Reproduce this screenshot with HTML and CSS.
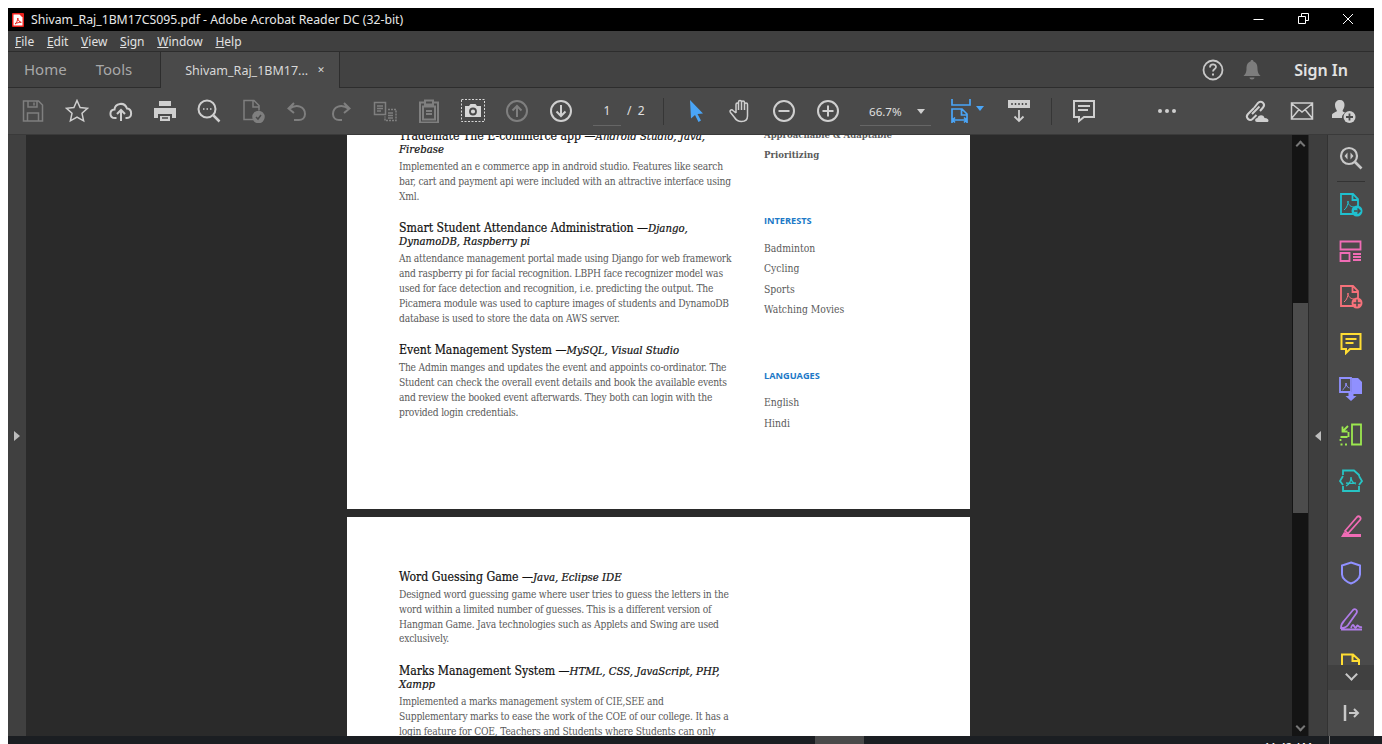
FILE: index.html
```html
<!DOCTYPE html>
<html lang="en">
<head>
<meta charset="utf-8">
<title>Shivam_Raj_1BM17CS095.pdf - Adobe Acrobat Reader DC (32-bit)</title>
<link rel="stylesheet" href="styles.css">
</head>
<body>
<div class="app">
  <header class="titlebar">
    <svg class="app-icon" viewBox="0 0 12 14" width="12" height="14"><rect width="12" height="14" rx="1" fill="#e8211c"/><path d="M1.500 1.500h6l3 3v8h-9z" fill="#fff"/><path d="M3 11c1.500-1 2.700-3.500 2.800-6 .3 2.500 1.700 4 3.500 4.300-2 0-4.300.4-6.300 1.700z" fill="none" stroke="#e8211c" stroke-width="1"/></svg>
    <span class="title-text">Shivam_Raj_1BM17CS095.pdf - Adobe Acrobat Reader DC (32-bit)</span>
    <div class="winctl">
      <svg viewBox="0 0 45 22" width="45" height="22"><path d="M17.500 10.500h10" stroke="#fff" fill="none"/></svg>
      <svg viewBox="0 0 45 22" width="45" height="22"><path d="M17.500 7.500h7v7h-7zM20.500 7.500v-3h7v7h-3" stroke="#fff" fill="none"/></svg>
      <svg viewBox="0 0 45 22" width="45" height="22"><path d="M17 5l10 10M27 5l-10 10" stroke="#fff" fill="none"/></svg>
    </div>
  </header>
  <nav class="menubar">
    <span class="menu-item"><u>F</u>ile</span>
    <span class="menu-item"><u>E</u>dit</span>
    <span class="menu-item"><u>V</u>iew</span>
    <span class="menu-item"><u>S</u>ign</span>
    <span class="menu-item"><u>W</u>indow</span>
    <span class="menu-item"><u>H</u>elp</span>
  </nav>
  <div class="tabbar">
    <span class="tab tab-home">Home</span>
    <span class="tab tab-tools">Tools</span>
    <div class="tab-active"><span class="tab-name">Shivam_Raj_1BM17...</span><span class="tab-close">✕</span></div>
    <div class="tab-right">
      <svg class="help" viewBox="0 0 22 22" width="22" height="22"><circle cx="11" cy="11" r="9.500" fill="none" stroke="#c8c8c8" stroke-width="1.800"/><path d="M8 8.500c0-4 6-4 6-.5 0 2-3 2-3 4.500" fill="none" stroke="#c8c8c8" stroke-width="1.800"/><rect x="10" y="14.500" width="2" height="2" fill="#c8c8c8"/></svg>
      <svg class="bell" viewBox="0 0 20 22" width="20" height="22"><path d="M10 1c1 0 1.500.7 1.500 1.500C15 3.500 15.500 7 15.500 10c0 3 1 5 3 7H1.500c2-2 3-4 3-7 0-3 .5-6.500 4-7.500C8.500 1.700 9 1 10 1zM7.500 18.500h5c0 1-1 2-2.500 2s-2.500-1-2.500-2z" fill="#7d7d7d"/></svg>
      <span class="signin">Sign In</span>
    </div>
  </div>
  <div class="toolbar">
    <span class="btn"><svg viewBox="0 0 24 24" width="24" height="24" class="s-off"><path d="M2.500 2h15l4 4v16h-19zM7 2v6h9V2M13 3.500v3M6.500 22v-8h11v8"/></svg></span>
    <span class="btn"><svg viewBox="0 0 24 24" width="24" height="24" class="s-on"><path d="M12 1.500l3.100 7 7.400.8-5.500 5 1.600 7.500-6.600-3.800-6.600 3.800 1.600-7.500-5.500-5 7.400-.8z"/></svg></span>
    <span class="btn"><svg viewBox="0 0 24 24" width="24" height="24" class="s-on s-bold"><path d="M7.500 19H6c-6 0-6-8-.5-8.500C6 4 15.500 2.500 18 9.500c5.500.5 5.500 9.500 0 9.500h-1.500M12 22V11.500M8 15l4-4 4 4"/></svg></span>
    <span class="btn"><svg viewBox="0 0 24 24" width="24" height="24"><path d="M6 2h12v5H6zM1 9h22v10h-4v-4H5v4H1zM7 17h10v5H7z" fill="#cfcfcf"/><path d="M9 19h6" stroke="#4a4a4a" stroke-width="1.500"/></svg></span>
    <span class="btn"><svg viewBox="0 0 24 24" width="24" height="24" class="s-on s-bold"><circle cx="10" cy="10" r="8.500"/><path d="M16.500 16.500l6 6" stroke-width="2.500"/><path d="M6 10h1.500M9.500 10H11M13 10h1.500" stroke-width="1.600"/></svg></span>
    <span class="btn"><svg viewBox="0 0 24 24" width="24" height="24" class="s-off"><path d="M13 20.500H3v-19h10l5 5v5M12 2v6h6"/><circle cx="17.500" cy="18" r="5.500" fill="#7f7f7f"/><path d="M15 18l2 2 3-4" stroke="#4a4a4a"/></svg></span>
    <span class="btn"><svg viewBox="0 0 24 24" width="24" height="24" class="s-off s-bold"><path d="M4 10c8-6 16-2 16 5 0 4-3 6-6 6H9M9 4L3.500 9.500 9 14"/></svg></span>
    <span class="btn"><svg viewBox="0 0 24 24" width="24" height="24" class="s-off s-bold"><path d="M20 10c-8-6-16-2-16 5 0 4 3 6 6 6h3M15 4l5.500 5.500L15 14"/></svg></span>
    <span class="btn"><svg viewBox="0 0 24 24" width="24" height="24" class="s-off"><path d="M1.500 3.500h11v12h-11zM4 7h6M4 9.500h6M4 12h4"/><path d="M15 10.500h8v11H12v-4" stroke-dasharray="2 1"/><path d="M15 14h5M15 16.500h5M15 19h5"/></svg></span>
    <span class="btn"><svg viewBox="0 0 24 24" width="24" height="24" class="s-off s-bold"><path d="M7 3.500H3v20h18v-20h-4M8 1.500h8v4H8zM6 7.500h12v13H6zM9 12h6M9 15h6"/></svg></span>
    <span class="btn"><svg viewBox="0 0 24 24" width="24" height="24"><rect x=".5" y=".5" width="23" height="22" fill="none" stroke="#d8d8d8" stroke-dasharray="2 1.500"/><path d="M4 7h4l1.500-2h5L16 7h4v11H4z" fill="#d8d8d8"/><circle cx="12" cy="12.500" r="3" fill="none" stroke="#4a4a4a" stroke-width="1.800"/></svg></span>
    <span class="btn"><svg viewBox="0 0 24 24" width="24" height="24" class="s-off s-bold"><circle cx="12" cy="12" r="10"/><path d="M12 18V7M7.500 11.500L12 7l4.500 4.500"/></svg></span>
    <span class="btn"><svg viewBox="0 0 24 24" width="24" height="24" class="s-on s-bold"><circle cx="12" cy="12" r="10"/><path d="M12 6v11M7.500 12.500L12 17l4.500-4.500"/></svg></span>
    <div class="pager">
      <span class="page-no">1</span>
      <span class="page-total">/&nbsp;&nbsp;2</span>
    </div>
    <span class="vsep"></span>
    <span class="btn"><svg viewBox="0 0 24 24" width="24" height="24"><path d="M6 1l13 13.500-5.500.5 3.500 6.500-2.500 1.500-3.500-7L7 19.500z" fill="#4aa5f7"/></svg></span>
    <span class="btn"><svg viewBox="0 0 24 24" width="24" height="24" class="s-on"><path d="M8 14V5.500c0-2 2.500-2 2.500 0V11M10.500 11V3c0-2 3-2 3 0v8M13.500 11V3.500c0-2 3-2 3 0V11M16.500 11V5.500c0-2 3-2 3 0V17c0 4-3 5.500-6 5.500-4 0-5.500-1.500-7-4l-4-5c-1.500-2 1-3.500 2.500-2l3 2.500"/></svg></span>
    <span class="btn"><svg viewBox="0 0 24 24" width="24" height="24" class="s-on s-bold"><circle cx="12" cy="12" r="10"/><path d="M6.500 12h11"/></svg></span>
    <span class="btn"><svg viewBox="0 0 24 24" width="24" height="24" class="s-on s-bold"><circle cx="12" cy="12" r="10"/><path d="M6.500 12h11M12 6.500v11"/></svg></span>
    <div class="zoomctl"><span class="zoom-val">66.7%</span><span class="caret"></span></div>
    <span class="btn fit"><svg viewBox="0 0 24 26" width="24" height="26" fill="none" stroke="#4aa5f7" stroke-width="2"><path d="M3 1v6h18V1M3 25V11h10l5 5v9M3 22h15M6 19.500L3.500 22 6 24.500M15 19.500l2.500 2.500-2.500 2.500M12.500 11v6H18" stroke-width="1.700"/></svg><span class="caret caret-blue"></span></span>
    <span class="btn read"><svg viewBox="0 0 24 24" width="24" height="24"><path d="M1 1h22v8H1z" fill="#cfcfcf"/><path d="M5 4v2M8.500 4v2M12 4v2M15.500 4v2M19 4v2" stroke="#4a4a4a" stroke-width="1.500"/><path d="M12 11v11M7.500 17.500L12 22l4.500-4.500" stroke="#cfcfcf" stroke-width="1.800" fill="none"/></svg></span>
    <span class="vsep vsep-b"></span>
    <span class="btn comment"><svg viewBox="0 0 24 24" width="24" height="24" class="s-on s-bold"><path d="M2 2h20v16H12l-5 4v-4H2zM6 7h12M6 11h10"/></svg></span>
    <span class="dots"><i></i><i></i><i></i></span>
    <span class="btn link"><svg viewBox="0 0 26 24" width="26" height="24"><g fill="none" stroke="#cfcfcf" stroke-width="2"><path d="M10 9L4 15c-3 3 1 8 4.500 5l4-4"/><path d="M8 15l7.500-7.500M10 9l4-5c3.500-3 8 1 5 4.500L16 12"/></g><path d="M13 23c-2.500 0-2.500-4 .5-4 .5-3 6-4 7 0 3 0 4 1.500 4 2.500 0 1-.7 1.500-1.500 1.500z" fill="#cfcfcf"/></svg></span>
    <span class="btn mail"><svg viewBox="0 0 24 24" width="24" height="24" class="s-on"><path d="M1.500 4h21v16h-21zM1.500 4.500L12 13 22.500 4.500M1.500 19.500L9 10.500M22.500 19.500L15 10.500"/></svg></span>
    <span class="btn user"><svg viewBox="0 0 26 24" width="26" height="24"><path d="M9 1c3 0 4.500 2 4.500 5s-1.500 4.500-2 6c1 1 2 1.300 2.700 1.800C11 15.500 11 18 11 19H1v-3c0-2 4-2.800 5-4-.7-1.500-2-3-2-6s2-5 5-5z" fill="#cfcfcf"/><circle cx="18.500" cy="18" r="6" fill="#cfcfcf"/><path d="M18.500 14.500v7M15 18h7" stroke="#4a4a4a" stroke-width="1.800"/></svg></span>
  </div>
  <main class="workspace">
    <div class="rail-left"><span class="arrow-r"></span></div>
    <div class="viewer">
      <div class="pages">
        <section class="page page-one">
          <div class="col-main">
            <article class="project">
              <h3>Trademate The E-commerce app —<em>Android Studio, Java,<br>Firebase</em></h3>
              <p>Implemented an e commerce app in android studio. Features like search<br>bar, cart and payment api were included with an attractive interface using<br>Xml.</p>
            </article>
            <article class="project">
              <h3>Smart Student Attendance Administration —<em>Django,<br>DynamoDB, Raspberry pi</em></h3>
              <p>An attendance management portal made using Django for web framework<br>and raspberry pi for facial recognition. LBPH face recognizer model was<br>used for face detection and recognition, i.e. predicting the output. The<br>Picamera module was used to capture images of students and DynamoDB<br>database is used to store the data on AWS server.</p>
            </article>
            <article class="project">
              <h3>Event Management System —<em>MySQL, Visual Studio</em></h3>
              <p>The Admin manges and updates the event and appoints co-ordinator. The<br>Student can check the overall event details and book the available events<br>and review the booked event afterwards. They both can login with the<br>provided login credentials.</p>
            </article>
          </div>
          <aside class="col-side">
            <ul class="side-list">
              <li class="strong">Approachable &amp; Adaptable</li>
              <li class="strong">Prioritizing</li>
            </ul>
            <h4>INTERESTS</h4>
            <ul class="side-list">
              <li>Badminton</li>
              <li>Cycling</li>
              <li>Sports</li>
              <li>Watching Movies</li>
            </ul>
            <h4>LANGUAGES</h4>
            <ul class="side-list">
              <li>English</li>
              <li>Hindi</li>
            </ul>
          </aside>
        </section>
        <section class="page page-two">
          <div class="col-main">
            <article class="project">
              <h3>Word Guessing Game —<em>Java, Eclipse IDE</em></h3>
              <p>Designed word guessing game where user tries to guess the letters in the<br>word within a limited number of guesses. This is a different version of<br>Hangman Game. Java technologies such as Applets and Swing are used<br>exclusively.</p>
            </article>
            <article class="project">
              <h3>Marks Management System —<em>HTML, CSS, JavaScript, PHP,<br>Xampp</em></h3>
              <p>Implemented a marks management system of CIE,SEE and<br>Supplementary marks to ease the work of the COE of our college. It has a<br>login feature for COE, Teachers and Students where Students can only<br>view their marks.</p>
            </article>
          </div>
        </section>
      </div>
    </div>
    <div class="scrollbar">
      <span class="chev chev-up"></span>
      <div class="track"><span class="thumb"></span></div>
      <span class="chev chev-down"></span>
    </div>
    <div class="rail-right"><span class="arrow-l"></span></div>
    <aside class="tools">
      <div class="tool-list">
        <span class="tool tool-top"><svg viewBox="0 0 24 24" width="24" height="24" fill="none" stroke="#c8c8c8" stroke-width="2.200"><circle cx="10" cy="10" r="8"/><path d="M16 16l6.500 6.500" stroke-width="2.600"/><path d="M8.500 6.500L5.500 10l3 3.500zM11.500 6.500l3 3.500-3 3.500z" fill="#c8c8c8" stroke="none"/></svg></span>
        <span class="tool-sep"></span>
        <span class="tool"><svg viewBox="0 0 24 24" width="24" height="24" fill="none" stroke="#1fc0cf" stroke-width="1.800"><path d="M14 21H2V1h12l5 5v7M13.500 1v6H19"/><path d="M5 17c3-2 4-6 4-9 0 4 3 6 6 6" stroke-width="1"/><circle cx="18" cy="18" r="5.500" fill="#1fc0cf" stroke="none"/><path d="M15 18h6M18.500 15.500L21 18l-2.500 2.500" stroke="#4a4a4a" stroke-width="1.500"/></svg></span>
        <span class="tool"><svg viewBox="0 0 24 24" width="24" height="24" fill="none" stroke="#f06cb5" stroke-width="1.800"><path d="M1.500 2.500h20v8h-20zM1.500 14h9v8h-9zM14 15h8M14 18h8M14 21h8"/></svg></span>
        <span class="tool"><svg viewBox="0 0 24 24" width="24" height="24" fill="none" stroke="#f6717a" stroke-width="1.800"><path d="M14 21H2V1h12l5 5v7M13.500 1v6H19"/><path d="M5 17c3-2 4-6 4-9 0 4 3 6 6 6" stroke-width="1"/><circle cx="18" cy="18" r="5.500" fill="#f6717a" stroke="none"/><path d="M14.500 18h7M18 14.500v7" stroke="#4a4a4a" stroke-width="1.500"/></svg></span>
        <span class="tool"><svg viewBox="0 0 24 24" width="24" height="24" fill="none" stroke="#ffdd33" stroke-width="2"><path d="M2.500 3h19v15H11l-4 4v-4H2.500zM6.500 8h11M6.500 12h8"/></svg></span>
        <span class="tool"><svg viewBox="0 0 24 24" width="24" height="24"><path d="M1 1h11v14H1z" fill="none" stroke="#9090ff" stroke-width="1.800"/><path d="M13 1h6l4 4v12H13z" fill="#9090ff"/><path d="M3.500 13c2.500-2 3.500-4 3.500-7 0 3 2 4.500 3.500 5" fill="none" stroke="#9090ff"/><path d="M9.500 15h5v4h3L12 24l-5.500-5h3z" fill="#9090ff"/></svg></span>
        <span class="tool"><svg viewBox="0 0 24 24" width="24" height="24" fill="none" stroke="#9ce84f" stroke-width="1.800"><path d="M13 1.500h9v20h-9zM1.500 21.500h2M6 21.500h2M1.500 18v-2M1.500 14h7M9.500 14V9M9 3L3.500 8.500M3.500 3.500v5h5"/></svg></span>
        <span class="tool"><svg viewBox="0 0 24 24" width="24" height="24" fill="none" stroke="#27c4c4" stroke-width="1.800"><path d="M4 6V1.500h11L20 6v1M20 17v5H4v-5M4 7L1 12l3 4M20 7l3 5-3 4"/><path d="M7 17c3-1.500 5-4.500 5-9 0 4 2 6 5 7M7 14c3 .5 7 .5 10 0" stroke-width="1.300"/></svg></span>
        <span class="tool"><svg viewBox="0 0 24 24" width="24" height="24"><path d="M6 16L18 2c2-2 5 1 3 3L9 18.500z" fill="none" stroke="#f06cb5" stroke-width="1.800"/><path d="M2 22l3-5 5 2h12v3z" fill="#f06cb5"/></svg></span>
        <span class="tool"><svg viewBox="0 0 24 24" width="24" height="24" fill="none" stroke="#9090ff" stroke-width="2"><path d="M12 1.500l9 3v9c0 4-5 7.500-9 9-4-1.500-9-5-9-9v-9z"/></svg></span>
        <span class="tool"><svg viewBox="0 0 24 24" width="24" height="24" fill="none" stroke="#b07ce8" stroke-width="1.800"><path d="M2 21c0-4 1-5 3-7l9-11c2-2 5 0 3.500 3L9 18c-1.500 2-3 3-7 3zM2 22.500h21M12 21c1-3 2-4 3-2s2 2 3 0 1 2 5 1"/></svg></span>
        <span class="tool"><svg viewBox="0 0 24 24" width="24" height="24" fill="none" stroke="#ffdd33" stroke-width="2"><path d="M3 22V1.500h11L20 7v15M13.500 2v6H20"/></svg></span>
      </div>
      <div class="tool-more"><span class="chev-big"></span></div>
      <div class="tool-expand"><svg viewBox="0 0 18 18" width="18" height="18" fill="none" stroke="#c8c8c8" stroke-width="2"><path d="M3 1v16" stroke-width="2.500"/><path d="M7 9h9M12 5l4 4-4 4"/></svg></div>
    </aside>
  </main>
</div>
<footer class="taskbar">
  <span class="hscroll"></span>
  <span class="clock">11:42 AM</span>
  <span class="showdesk"></span>
</footer>
</body>
</html>
```
FILE: styles.css
```css
* { box-sizing: border-box; }
html, body { height: 100%; }
body {
  margin: 0;
  padding: 8px 0 0 8px;
  background: #fff;
  overflow: hidden;
  font-family: "Noto Sans", "Open Sans", sans-serif;
}
.app {
  width: 1366px;
  height: 728px;
  display: flex;
  flex-direction: column;
  overflow: hidden;
  background: #4a4a4a;
}
.titlebar {
  height: 23px;
  background: #000;
  display: flex;
  align-items: center;
  padding-left: 4px;
  color: #e8e8e8;
  flex: none;
}
.app-icon { flex: none; }
.title-text { margin-left: 7px; font-size: 12.270px; white-space: nowrap; }
.winctl { margin-left: auto; display: flex; padding-right: 3px; }
.winctl svg { display: block; flex: none; }
.menubar {
  height: 21px;
  flex: none;
  background: #404040;
  border-bottom: 1px solid #2d2d2d;
  display: flex;
  align-items: center;
  padding-left: 7px;
  gap: 12.700px;
  font-size: 12px;
  color: #e2e2e2;
}
.tabbar {
  height: 36px;
  flex: none;
  background: #424242;
  border-bottom: 1px solid #2d2d2d;
  display: flex;
  align-items: stretch;
}
.tab { font-size: 15px; color: #a8a8a8; line-height: 34px; }
.tab-home { margin-left: 16px; }
.tab-tools { margin-left: 29px; }
.tab-active {
  margin-left: 28px;
  width: 180px;
  height: 36px;
  background: #4a4a4a;
  border-left: 1px solid #2d2d2d;
  border-right: 1px solid #2d2d2d;
  padding-left: 24px;
  display: flex;
  align-items: center;
  color: #d8d8d8;
  font-size: 12.500px;
  white-space: nowrap;
}
.tab-close { margin-left: 9px; font-size: 9px; font-weight: 700; color: #d8d8d8; font-family: "DejaVu Sans", sans-serif; }
.tab-right { margin-left: auto; display: flex; align-items: center; padding-right: 26px; }
.bell { margin-left: 18px; }
.signin { margin-left: 32px; font-size: 16px; font-weight: 600; color: #e2e2e2; line-height: 34px; }
.toolbar {
  height: 47px;
  flex: none;
  background: #4a4a4a;
  border-bottom: 1px solid #3a3a3a;
  display: flex;
  align-items: center;
  padding-left: 3px;
}
.btn { width: 44px; height: 44px; flex: none; display: flex; align-items: center; justify-content: center; }
.btn svg { display: block; }
svg.s-off, svg.s-on { fill: none; stroke-width: 1.500; }
svg.s-off { stroke: #7f7f7f; }
svg.s-on { stroke: #cfcfcf; }
svg.s-bold { stroke-width: 2; }
.pager { width: 80px; flex: none; display: flex; font-size: 12px; color: #e0e0e0; align-items: center; }
.page-no { width: 28px; margin-left: 10px; text-align: center; border-bottom: 1px solid #666; line-height: 24px; height: 27px; margin-top: 3px; }
.page-total { margin-left: 6px; margin-top: -1px; }
.vsep { width: 1px; height: 27px; background: #363636; flex: none; margin-right: 10px; }
.vsep-b { margin: 0 10px 0 10px; }
.zoomctl {
  width: 71px;
  margin-left: 10px;
  flex: none;
  display: flex;
  align-items: center;
  justify-content: space-between;
  height: 27px;
  margin-top: 3px;
  border-bottom: 1px solid #666;
  font-size: 11.600px;
  color: #e0e0e0;
  padding: 0 6px 2px 9px;
}
.caret { width: 0; height: 0; border-left: 4px solid transparent; border-right: 4px solid transparent; border-top: 5px solid #cfcfcf; }
.caret-blue { border-top-color: #4aa5f7; margin: -6px 0 0 3px; }
.fit { width: 66px; padding-left: 18px; justify-content: flex-start; }
.dots { width: 122px; flex: none; display: flex; gap: 3px; justify-content: center; }
.dots i { width: 4px; height: 4px; background: #cfcfcf; border-radius: 50%; }
.link { margin-left: 7px; }
.mail { margin-left: 1px; }
.user { margin-left: -2px; }
.workspace { flex: 1; min-height: 0; display: flex; }
.rail-left { width: 18px; flex: none; background: #404040; display: flex; align-items: center; justify-content: center; }
.arrow-r { border-left: 6px solid #bdbdbd; border-top: 5.500px solid transparent; border-bottom: 5.500px solid transparent; }
.viewer { flex: 1; min-width: 0; background: #2a2a2a; overflow: hidden; display: flex; justify-content: center; }
.pages { width: 623px; margin-top: -15px; margin-left: -1px; flex: none; }
.page { background: #fff; display: flex; padding-left: 52px; overflow: hidden; }
.page-one { height: 389px; margin-bottom: 8px; padding-top: 9.500px; }
.page-two { height: 400px; padding-top: 53.500px; }
.col-main { width: 365px; flex: none; }
.project { margin-bottom: 17.500px; }
.project h3 {
  margin: 0 0 4.500px;
  font: 400 12.200px/13px "DejaVu Serif Condensed", "DejaVu Serif", serif;
  -webkit-text-stroke: .2px #111;
  color: #111;
  white-space: nowrap;
}
.project em { font-style: italic; font-size: 11.300px; }
.project p {
  margin: 0;
  font: 400 10.200px/14.800px "DejaVu Serif Condensed", "DejaVu Serif", serif;
  letter-spacing: -.2px;
  color: #5a5a5a;
  white-space: nowrap;
}
.col-side { margin-top: -5px; font: 400 10.300px/20.600px "DejaVu Serif Condensed", "DejaVu Serif", serif; color: #5a5a5a; }
.side-list { list-style: none; margin: 0; padding: 0; white-space: nowrap; }
.strong { font-weight: 700; font-size: 9.500px; }
.col-side h4 { margin: 48.600px 0 9.400px; font: 700 9.200px/14px "Open Sans", sans-serif; color: #2079c7; }
.scrollbar { width: 17px; flex: none; background: #141414; display: flex; flex-direction: column; align-items: center; border-right: 1px solid #2a2a2a; }
.chev { width: 7px; height: 7px; border-left: 2px solid #777; border-top: 2px solid #777; flex: none; }
.chev-up { transform: rotate(45deg); margin: 7px 0 0; }
.chev-down { transform: rotate(225deg); margin: 0 0 6px; }
.track { flex: 1; width: 100%; padding-top: 154px; }
.thumb { display: block; width: 15px; height: 210px; margin: 0 auto; background: #4c4c4c; }
.rail-right { width: 19px; flex: none; background: #3e3e3e; display: flex; align-items: center; justify-content: center; border-right: 1px solid #333; }
.arrow-l { border-right: 6px solid #bdbdbd; border-top: 5.500px solid transparent; border-bottom: 5.500px solid transparent; }
.tools { width: 46px; flex: none; background: #4a4a4a; display: flex; flex-direction: column; }
.tool-list { height: 530px; overflow: hidden; flex: none; display: flex; flex-direction: column; align-items: center; }
.tool { height: 46px; width: 100%; flex: none; display: flex; align-items: center; justify-content: center; }
.tool svg { display: block; }
.tool-sep { width: 28px; height: 1px; flex: none; background: #333; }
.tool-more { height: 25px; flex: none; background: #404040; display: flex; justify-content: center; align-items: center; }
.chev-big { width: 9px; height: 9px; border-right: 2.500px solid #c8c8c8; border-bottom: 2.500px solid #c8c8c8; transform: rotate(45deg); margin-top: -6px; }
.tool-expand { flex: 1; display: flex; align-items: center; justify-content: center; }
.taskbar { width: 1374px; height: 8px; background: #1b1e22; overflow: hidden; display: flex; }
.hscroll { width: 49px; height: 8px; background: #4a4a4a; margin-left: 807px; flex: none; }
.clock { margin-left: 400px; font-size: 11px; line-height: 14px; color: #fff; white-space: nowrap; padding-top: 4px; width: 49px; flex: none; }
.showdesk { width: 1px; height: 8px; background: #777; margin-left: 16px; flex: none; }
```
